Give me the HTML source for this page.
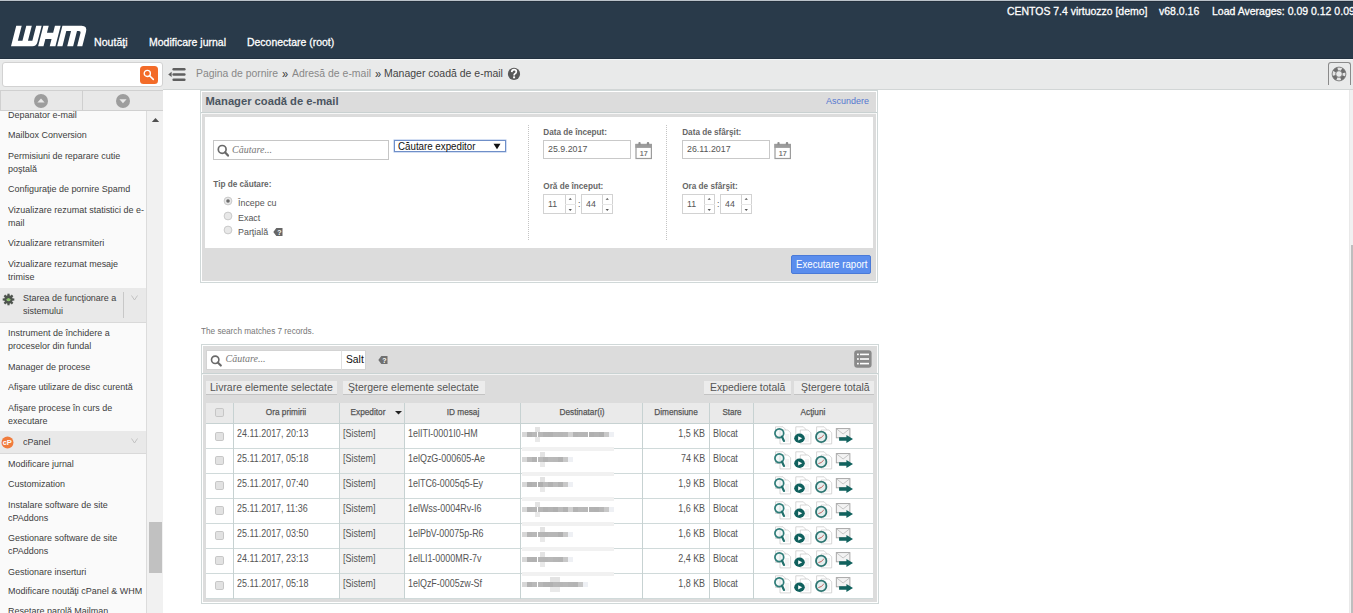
<!DOCTYPE html>
<html><head><meta charset="utf-8"><title>WHM</title>
<style>
html,body{margin:0;padding:0;width:1353px;height:613px;overflow:hidden;background:#fff;position:relative;font-family:"Liberation Sans",sans-serif;}
.t{position:absolute;white-space:nowrap;}
.r{position:absolute;}
</style></head><body>
<div class="r" style="left:0px;top:0px;width:1353px;height:1px;background:#bac2ca;"></div>
<div class="r" style="left:0px;top:1px;width:1353px;height:57px;background:#293a4a;"></div>
<div class="r" style="left:0px;top:1px;width:1353px;height:1px;background:#24303d;"></div>
<div class="r" style="left:0px;top:58px;width:1353px;height:1px;background:#223140;"></div>
<svg class="r" style="left:0;top:0" width="100" height="60" viewBox="0 0 100 60">
<g transform="translate(0,46.2) skewX(-14.33) translate(0,-46.2)" fill="#fff">
<path d="M11 25.65 H16.45 V40.7 H21.05 V25.65 H26.55 V40.7 H30.95 V25.65 H36.4 V42.2 Q36.4 46.2 32.4 46.2 H11 Z"/>
<path d="M38.1 25.65 H43.5 V32.7 H49.7 V25.65 H55.4 V46.2 H49.7 V38.9 H43.5 V46.2 H38.1 Z"/>
<path d="M57.15 25.65 H76.3 Q82.3 25.65 82.3 31.65 V46.2 H77.14 V33.3 Q77.14 31.1 74.94 31.1 H73.14 V46.2 H67.19 V31.1 H62.44 V46.2 H57.15 Z"/>
</g></svg>
<div class="t" style="left:94.4px;transform-origin:0 0;top:32px;font-size:11.66px;line-height:20px;transform:scaleX(0.9091);color:#fff;font-weight:normal;font-style:normal;font-family:'Liberation Sans', sans-serif;-webkit-text-stroke:0.3px #fff">Noutăţi</div>
<div class="t" style="left:148.6px;transform-origin:0 0;top:32px;font-size:11.55px;line-height:20px;transform:scaleX(0.9091);color:#fff;font-weight:normal;font-style:normal;font-family:'Liberation Sans', sans-serif;-webkit-text-stroke:0.3px #fff">Modificare jurnal</div>
<div class="t" style="left:247px;transform-origin:0 0;top:32px;font-size:11.5px;line-height:20px;transform:scaleX(0.9091);color:#fff;font-weight:normal;font-style:normal;font-family:'Liberation Sans', sans-serif;-webkit-text-stroke:0.3px #fff">Deconectare (root)</div>
<div class="t" style="left:1006.5px;transform-origin:0 0;top:1px;font-size:11.51px;line-height:20px;transform:scaleX(0.9091);color:#fff;font-weight:normal;font-style:normal;font-family:'Liberation Sans', sans-serif;-webkit-text-stroke:0.3px #fff">CENTOS 7.4 virtuozzo [demo]</div>
<div class="t" style="left:1159px;transform-origin:0 0;top:1px;font-size:11.55px;line-height:20px;transform:scaleX(0.9091);color:#fff;font-weight:normal;font-style:normal;font-family:'Liberation Sans', sans-serif;-webkit-text-stroke:0.3px #fff">v68.0.16</div>
<div class="t" style="left:1211.5px;transform-origin:0 0;top:1px;font-size:11.55px;line-height:20px;transform:scaleX(0.9091);color:#fff;font-weight:normal;font-style:normal;font-family:'Liberation Sans', sans-serif;-webkit-text-stroke:0.3px #fff">Load Averages: 0.09 0.12 0.09</div>
<div class="r" style="left:0px;top:59px;width:1353px;height:31px;background:#e9eaea;"></div>
<div class="r" style="left:0px;top:59px;width:1353px;height:1px;background:#f3f6f7;"></div>
<div class="r" style="left:163px;top:89px;width:1190px;height:1px;background:#d2d6d6;"></div>
<div class="r" style="left:2px;top:62px;width:160.5px;height:25px;background:#fff;border:1px solid #d2d2d2;box-sizing:border-box;border-radius:3px"></div>
<div class="r" style="left:140px;top:66px;width:18px;height:18px;background:#f36b28;border-radius:3.5px"></div>
<svg class="r" style="left:140px;top:66px" width="18" height="18" viewBox="0 0 18 18">
<circle cx="7.3" cy="7.4" r="3.1" fill="none" stroke="#fff" stroke-width="1.3"/>
<path d="M9.6 9.8 L13.3 13.4" stroke="#fff" stroke-width="1.6" stroke-linecap="round"/></svg>
<svg class="r" style="left:167px;top:66px" width="22" height="16" viewBox="0 0 22 16">
<path d="M1.2 8.4 L4.6 5.7 V11.1 Z" fill="#5f5f5f"/>
<rect x="5.4" y="1.9" width="13.2" height="2.5" rx="1.25" fill="#5f5f5f"/>
<rect x="5.4" y="7.15" width="13.2" height="2.5" rx="1.25" fill="#5f5f5f"/>
<rect x="5.4" y="12.4" width="13.2" height="2.5" rx="1.25" fill="#5f5f5f"/></svg>
<div class="t" style="left:196.3px;transform-origin:0 0;top:63px;font-size:11.44px;line-height:20px;transform:scaleX(0.9091);color:#888;font-weight:normal;font-style:normal;font-family:'Liberation Sans', sans-serif;">Pagina de pornire</div>
<div class="t" style="left:282.3px;transform-origin:0 0;top:64px;font-size:12.1px;line-height:20px;transform:scaleX(0.9091);color:#333;font-weight:normal;font-style:normal;font-family:'Liberation Sans', sans-serif;">»</div>
<div class="t" style="left:291.8px;transform-origin:0 0;top:63px;font-size:11.5px;line-height:20px;transform:scaleX(0.9091);color:#888;font-weight:normal;font-style:normal;font-family:'Liberation Sans', sans-serif;">Adresă de e-mail</div>
<div class="t" style="left:374.8px;transform-origin:0 0;top:64px;font-size:12.1px;line-height:20px;transform:scaleX(0.9091);color:#333;font-weight:normal;font-style:normal;font-family:'Liberation Sans', sans-serif;">»</div>
<div class="t" style="left:383.5px;transform-origin:0 0;top:63px;font-size:11.54px;line-height:20px;transform:scaleX(0.9091);color:#444;font-weight:normal;font-style:normal;font-family:'Liberation Sans', sans-serif;">Manager coadă de e-mail</div>
<svg class="r" style="left:506.5px;top:67px" width="14" height="14" viewBox="0 0 14 14">
<circle cx="7" cy="6.9" r="6.1" fill="#595959"/>
<path d="M4.7 5.1 Q4.9 2.7 7.1 2.7 Q9.3 2.7 9.3 4.7 Q9.3 6 7.9 6.8 Q7.1 7.3 7.1 8.4" fill="none" stroke="#fff" stroke-width="1.7"/>
<rect x="6.1" y="9.4" width="2" height="1.9" fill="#fff"/></svg>
<div class="r" style="left:1328.2px;top:62px;width:22.5px;height:23px;background:none;border:1px solid #8a8a8a;border-bottom:none;border-radius:3px 3px 0 0;box-sizing:border-box"></div>
<svg class="r" style="left:1331px;top:65.9px" width="16" height="16" viewBox="0 0 16 16">
<circle cx="8" cy="8" r="5.15" fill="none" stroke="#e4e4e4" stroke-width="3.7"/>
<circle cx="8" cy="8" r="5.15" fill="none" stroke="#6e6e6e" stroke-width="3.7" stroke-dasharray="4.09 4" stroke-dashoffset="-2"/>
<circle cx="8" cy="8" r="6.9" fill="none" stroke="#777" stroke-width="0.9"/>
<circle cx="8" cy="8" r="3.35" fill="none" stroke="#777" stroke-width="0.9"/></svg>
<div class="r" style="left:0px;top:90px;width:163px;height:523px;background:#fafafa;"></div>
<div class="r" style="left:0px;top:90px;width:163px;height:20.5px;background:#e8e8e8;border-top:1px solid #d0d0d0;border-bottom:1px solid #d0d0d0;box-sizing:border-box"></div>
<div class="r" style="left:0px;top:90px;width:1px;height:20.5px;background:#d0d0d0;"></div>
<div class="r" style="left:81.5px;top:90px;width:1px;height:20.5px;background:#cfcfcf;"></div>
<svg class="r" style="left:33px;top:93px" width="16" height="16" viewBox="0 0 16 16">
<circle cx="8" cy="8" r="7" fill="#9d9d9d"/><path d="M4.4 9.6 L8 5.6 L11.6 9.6 Z" fill="#e8e8e8"/></svg>
<svg class="r" style="left:115px;top:93px" width="16" height="16" viewBox="0 0 16 16">
<circle cx="8" cy="8" r="7" fill="#9d9d9d"/><path d="M4.4 6.2 L8 10.2 L11.6 6.2 Z" fill="#e8e8e8"/></svg>
<div class="r" style="left:146px;top:111px;width:17px;height:502px;background:#f1f1f1;border-left:1px solid #dcdcdc;box-sizing:border-box"></div>
<div class="r" style="left:149.3px;top:522px;width:12.5px;height:51px;background:#c1c1c1;"></div>
<svg class="r" style="left:150px;top:116px" width="11" height="8" viewBox="0 0 11 8"><path d="M1.8 6 L5.5 2 L9.2 6 Z" fill="#505050"/></svg>
<div class="t" style="left:7.6px;transform-origin:0 0;top:105px;font-size:9.9px;line-height:20px;transform:scaleX(0.9091);color:#3d3d3d;font-weight:normal;font-style:normal;font-family:'Liberation Sans', sans-serif;">Depanator e-mail</div>
<div class="t" style="left:7.6px;transform-origin:0 0;top:125px;font-size:9.9px;line-height:20px;transform:scaleX(0.9091);color:#3d3d3d;font-weight:normal;font-style:normal;font-family:'Liberation Sans', sans-serif;">Mailbox Conversion</div>
<div class="t" style="left:7.6px;transform-origin:0 0;top:146px;font-size:9.9px;line-height:20px;transform:scaleX(0.9091);color:#3d3d3d;font-weight:normal;font-style:normal;font-family:'Liberation Sans', sans-serif;">Permisiuni de reparare cutie</div>
<div class="t" style="left:7.6px;transform-origin:0 0;top:159px;font-size:9.9px;line-height:20px;transform:scaleX(0.9091);color:#3d3d3d;font-weight:normal;font-style:normal;font-family:'Liberation Sans', sans-serif;">poştală</div>
<div class="t" style="left:7.6px;transform-origin:0 0;top:179px;font-size:9.9px;line-height:20px;transform:scaleX(0.9091);color:#3d3d3d;font-weight:normal;font-style:normal;font-family:'Liberation Sans', sans-serif;">Configuraţie de pornire Spamd</div>
<div class="t" style="left:7.6px;transform-origin:0 0;top:200px;font-size:9.9px;line-height:20px;transform:scaleX(0.9091);color:#3d3d3d;font-weight:normal;font-style:normal;font-family:'Liberation Sans', sans-serif;">Vizualizare rezumat statistici de e-</div>
<div class="t" style="left:7.6px;transform-origin:0 0;top:213px;font-size:9.9px;line-height:20px;transform:scaleX(0.9091);color:#3d3d3d;font-weight:normal;font-style:normal;font-family:'Liberation Sans', sans-serif;">mail</div>
<div class="t" style="left:7.6px;transform-origin:0 0;top:233px;font-size:9.9px;line-height:20px;transform:scaleX(0.9091);color:#3d3d3d;font-weight:normal;font-style:normal;font-family:'Liberation Sans', sans-serif;">Vizualizare retransmiteri</div>
<div class="t" style="left:7.6px;transform-origin:0 0;top:254px;font-size:9.9px;line-height:20px;transform:scaleX(0.9091);color:#3d3d3d;font-weight:normal;font-style:normal;font-family:'Liberation Sans', sans-serif;">Vizualizare rezumat mesaje</div>
<div class="t" style="left:7.6px;transform-origin:0 0;top:267px;font-size:9.9px;line-height:20px;transform:scaleX(0.9091);color:#3d3d3d;font-weight:normal;font-style:normal;font-family:'Liberation Sans', sans-serif;">trimise</div>
<div class="t" style="left:7.6px;transform-origin:0 0;top:323px;font-size:9.9px;line-height:20px;transform:scaleX(0.9091);color:#3d3d3d;font-weight:normal;font-style:normal;font-family:'Liberation Sans', sans-serif;">Instrument de închidere a</div>
<div class="t" style="left:7.6px;transform-origin:0 0;top:336px;font-size:9.9px;line-height:20px;transform:scaleX(0.9091);color:#3d3d3d;font-weight:normal;font-style:normal;font-family:'Liberation Sans', sans-serif;">proceselor din fundal</div>
<div class="t" style="left:7.6px;transform-origin:0 0;top:357px;font-size:9.9px;line-height:20px;transform:scaleX(0.9091);color:#3d3d3d;font-weight:normal;font-style:normal;font-family:'Liberation Sans', sans-serif;">Manager de procese</div>
<div class="t" style="left:7.6px;transform-origin:0 0;top:377px;font-size:9.9px;line-height:20px;transform:scaleX(0.9091);color:#3d3d3d;font-weight:normal;font-style:normal;font-family:'Liberation Sans', sans-serif;">Afişare utilizare de disc curentă</div>
<div class="t" style="left:7.6px;transform-origin:0 0;top:398px;font-size:9.9px;line-height:20px;transform:scaleX(0.9091);color:#3d3d3d;font-weight:normal;font-style:normal;font-family:'Liberation Sans', sans-serif;">Afişare procese în curs de</div>
<div class="t" style="left:7.6px;transform-origin:0 0;top:411px;font-size:9.9px;line-height:20px;transform:scaleX(0.9091);color:#3d3d3d;font-weight:normal;font-style:normal;font-family:'Liberation Sans', sans-serif;">executare</div>
<div class="t" style="left:7.6px;transform-origin:0 0;top:454px;font-size:9.9px;line-height:20px;transform:scaleX(0.9091);color:#3d3d3d;font-weight:normal;font-style:normal;font-family:'Liberation Sans', sans-serif;">Modificare jurnal</div>
<div class="t" style="left:7.6px;transform-origin:0 0;top:474px;font-size:9.9px;line-height:20px;transform:scaleX(0.9091);color:#3d3d3d;font-weight:normal;font-style:normal;font-family:'Liberation Sans', sans-serif;">Customization</div>
<div class="t" style="left:7.6px;transform-origin:0 0;top:495px;font-size:9.9px;line-height:20px;transform:scaleX(0.9091);color:#3d3d3d;font-weight:normal;font-style:normal;font-family:'Liberation Sans', sans-serif;">Instalare software de site</div>
<div class="t" style="left:7.6px;transform-origin:0 0;top:508px;font-size:9.9px;line-height:20px;transform:scaleX(0.9091);color:#3d3d3d;font-weight:normal;font-style:normal;font-family:'Liberation Sans', sans-serif;">cPAddons</div>
<div class="t" style="left:7.6px;transform-origin:0 0;top:528px;font-size:9.9px;line-height:20px;transform:scaleX(0.9091);color:#3d3d3d;font-weight:normal;font-style:normal;font-family:'Liberation Sans', sans-serif;">Gestionare software de site</div>
<div class="t" style="left:7.6px;transform-origin:0 0;top:541px;font-size:9.9px;line-height:20px;transform:scaleX(0.9091);color:#3d3d3d;font-weight:normal;font-style:normal;font-family:'Liberation Sans', sans-serif;">cPAddons</div>
<div class="t" style="left:7.6px;transform-origin:0 0;top:562px;font-size:9.9px;line-height:20px;transform:scaleX(0.9091);color:#3d3d3d;font-weight:normal;font-style:normal;font-family:'Liberation Sans', sans-serif;">Gestionare inserturi</div>
<div class="t" style="left:7.6px;transform-origin:0 0;top:581px;font-size:9.9px;line-height:20px;transform:scaleX(0.9091);color:#3d3d3d;font-weight:normal;font-style:normal;font-family:'Liberation Sans', sans-serif;">Modificare noutăţi cPanel &amp; WHM</div>
<div class="t" style="left:7.6px;transform-origin:0 0;top:601px;font-size:9.9px;line-height:20px;transform:scaleX(0.9091);color:#3d3d3d;font-weight:normal;font-style:normal;font-family:'Liberation Sans', sans-serif;">Resetare parolă Mailman</div>
<div class="r" style="left:0px;top:288px;width:146px;height:35px;background:#e9e9e9;border-bottom:1px solid #d9d9d9;box-sizing:border-box"></div>
<div class="t" style="left:22.5px;transform-origin:0 0;top:288px;font-size:9.9px;line-height:20px;transform:scaleX(0.9091);color:#3d3d3d;font-weight:normal;font-style:normal;font-family:'Liberation Sans', sans-serif;">Starea de funcţionare a</div>
<div class="t" style="left:22.5px;transform-origin:0 0;top:301px;font-size:9.9px;line-height:20px;transform:scaleX(0.9091);color:#3d3d3d;font-weight:normal;font-style:normal;font-family:'Liberation Sans', sans-serif;">sistemului</div>
<div class="r" style="left:123px;top:292px;width:1px;height:25.5px;background:#c8c8c8;"></div>
<svg class="r" style="left:130px;top:294px" width="9" height="8" viewBox="0 0 9 8"><path d="M1.5 1.5 L4.5 6 L7.5 1.5" fill="none" stroke="#bdbdbd" stroke-width="0.9"/></svg>
<svg class="r" style="left:1.5px;top:292.5px" width="13" height="13" viewBox="0 0 13 13">
<g fill="#4e544e"><circle cx="6.5" cy="6.5" r="4.2"/>
<rect x="5.4" y="0.7" width="2.2" height="11.6"/><rect x="0.7" y="5.4" width="11.6" height="2.2"/>
<rect x="5.4" y="0.7" width="2.2" height="11.6" transform="rotate(45 6.5 6.5)"/><rect x="5.4" y="0.7" width="2.2" height="11.6" transform="rotate(-45 6.5 6.5)"/></g>
<path d="M4 6.8 Q6.5 5.2 9 6.8 Q6.5 9.6 4 6.8 Z" fill="#a9d68c"/><circle cx="6.5" cy="6.5" r="1.6" fill="#8cc46a"/></svg>
<div class="r" style="left:0px;top:431px;width:146px;height:23px;background:#e9e9e9;border-bottom:1px solid #d9d9d9;box-sizing:border-box"></div>
<div class="t" style="left:22.5px;transform-origin:0 0;top:432px;font-size:9.9px;line-height:20px;transform:scaleX(0.9091);color:#3d3d3d;font-weight:normal;font-style:normal;font-family:'Liberation Sans', sans-serif;">cPanel</div>
<svg class="r" style="left:130px;top:437px" width="9" height="8" viewBox="0 0 9 8"><path d="M1.5 1.5 L4.5 6 L7.5 1.5" fill="none" stroke="#bdbdbd" stroke-width="0.9"/></svg>
<svg class="r" style="left:1.2px;top:436px" width="13" height="13" viewBox="0 0 13 13">
<circle cx="6.5" cy="6.5" r="6" fill="#f07b3c"/>
<text x="6.3" y="9.3" font-family="Liberation Sans" font-weight="bold" font-size="7.5" fill="#fff" text-anchor="middle">cP</text></svg>
<div class="r" style="left:200px;top:90px;width:678px;height:193px;background:#dcdcdc;border:1px solid #d0d8d8;box-sizing:border-box;box-shadow:inset 1px 1px 0 #fff, inset -1px -1px 0 #fff"></div>
<div class="r" style="left:201px;top:112px;width:676px;height:1px;background:#c9d1d1;"></div>
<div class="r" style="left:201px;top:113px;width:675px;height:1px;background:#f6f6f6;"></div>
<div class="t" style="left:205.5px;transform-origin:0 0;top:91px;font-size:11.2px;line-height:20px;color:#4a5560;font-weight:bold;font-style:normal;font-family:'Liberation Sans', sans-serif;">Manager coadă de e-mail</div>
<div class="t" style="left:825.8px;transform-origin:0 0;top:91px;font-size:9.9px;line-height:20px;transform:scaleX(0.9091);color:#5577d0;font-weight:normal;font-style:normal;font-family:'Liberation Sans', sans-serif;">Ascundere</div>
<div class="r" style="left:205px;top:117px;width:668px;height:131px;background:#fff;"></div>
<div class="r" style="left:213px;top:140px;width:176px;height:19.5px;background:#fff;border:1px solid #c6c6c6;box-sizing:border-box"></div>
<svg class="r" style="left:217px;top:144px" width="13" height="14" viewBox="0 0 13 14">
<circle cx="5.2" cy="5.4" r="3.9" fill="none" stroke="#6a6a6a" stroke-width="1.7"/>
<path d="M8 8.3 L11 11.6" stroke="#6a6a6a" stroke-width="2.2" stroke-linecap="round"/></svg>
<div class="t" style="left:232px;transform-origin:0 0;top:140px;font-size:10px;line-height:20px;color:#777;font-weight:normal;font-style:italic;font-family:'Liberation Serif', serif;">Căutare...</div>
<div class="r" style="left:394px;top:140px;width:112px;height:11.8px;background:#fff;border:1px solid #6f8fc8;box-sizing:border-box;box-shadow:0 0 0 0.5px #a9c0e8"></div>
<div class="t" style="left:397.5px;transform-origin:0 0;top:136px;font-size:10.73px;line-height:20px;transform:scaleX(0.9091);color:#111;font-weight:normal;font-style:normal;font-family:'Liberation Sans', sans-serif;">Căutare expeditor</div>
<svg class="r" style="left:492.5px;top:142.5px" width="8" height="7" viewBox="0 0 8 7"><path d="M0.5 0.8 H7.5 L4 6.2 Z" fill="#111"/></svg>
<div class="t" style="left:213.3px;transform-origin:0 0;top:175px;font-size:8.2px;line-height:20px;color:#666;font-weight:bold;font-style:normal;font-family:'Liberation Sans', sans-serif;">Tip de căutare:</div>
<svg class="r" style="left:222.8px;top:196.2px" width="10" height="10" viewBox="0 0 10 10"><circle cx="5" cy="5" r="3.9" fill="#e8e8e8" stroke="#c0c0c0" stroke-width="0.8"/><circle cx="5" cy="5" r="1.8" fill="#6b6b6b"/></svg>
<div class="t" style="left:237.8px;transform-origin:0 0;top:193px;font-size:9.79px;line-height:20px;transform:scaleX(0.9091);color:#555;font-weight:normal;font-style:normal;font-family:'Liberation Sans', sans-serif;">Începe cu</div>
<svg class="r" style="left:222.8px;top:210.7px" width="10" height="10" viewBox="0 0 10 10"><circle cx="5" cy="5" r="3.9" fill="#e8e8e8" stroke="#c0c0c0" stroke-width="0.8"/></svg>
<div class="t" style="left:237.8px;transform-origin:0 0;top:208px;font-size:9.79px;line-height:20px;transform:scaleX(0.9091);color:#555;font-weight:normal;font-style:normal;font-family:'Liberation Sans', sans-serif;">Exact</div>
<svg class="r" style="left:222.8px;top:225.2px" width="10" height="10" viewBox="0 0 10 10"><circle cx="5" cy="5" r="3.9" fill="#e8e8e8" stroke="#c0c0c0" stroke-width="0.8"/></svg>
<div class="t" style="left:237.8px;transform-origin:0 0;top:222px;font-size:9.79px;line-height:20px;transform:scaleX(0.9091);color:#555;font-weight:normal;font-style:normal;font-family:'Liberation Sans', sans-serif;">Parţială</div>
<svg class="r" style="left:273px;top:226.8px" width="10" height="10" viewBox="0 0 10 10"><path d="M0.3 5 L3.3 1 H9.5 V9 H3.3 Z" fill="#666"/><text x="6.3" y="8" font-family="Liberation Sans" font-weight="bold" font-size="7" fill="#fff" text-anchor="middle">?</text></svg>
<div class="r" style="left:527.5px;top:124.5px;width:0px;height:115px;background:none;border-left:1px dotted #c4c4c4"></div>
<div class="r" style="left:666.3px;top:124.5px;width:0px;height:115px;background:none;border-left:1px dotted #c4c4c4"></div>
<div class="t" style="left:543.3px;transform-origin:0 0;top:123px;font-size:8.2px;line-height:20px;color:#666;font-weight:bold;font-style:normal;font-family:'Liberation Sans', sans-serif;">Data de început:</div>
<div class="r" style="left:543.3px;top:140px;width:87.7px;height:19px;background:#fff;border:1px solid #c9c9c9;box-sizing:border-box"></div>
<div class="t" style="left:548.0999999999999px;transform-origin:0 0;top:139px;font-size:9.74px;line-height:20px;transform:scaleX(0.9091);color:#555;font-weight:normal;font-style:normal;font-family:'Liberation Sans', sans-serif;">25.9.2017</div>
<svg class="r" style="left:634.8px;top:141.9px" width="18" height="18" viewBox="0 0 18 18"><rect x="1" y="2.5" width="15.4" height="14" fill="#fff" stroke="#9c9c9c" stroke-width="1.2"/><rect x="0.4" y="1.9" width="16.6" height="4" fill="#9c9c9c"/><rect x="3.4" y="0.1" width="2.2" height="3.2" rx="1" fill="#8f8f8f"/><rect x="11.8" y="0.1" width="2.4" height="3.2" rx="1" fill="#8f8f8f"/><text x="8.7" y="13.7" font-family="Liberation Sans" font-weight="bold" font-size="7.2" fill="#7a7a7a" text-anchor="middle">17</text></svg>
<div class="t" style="left:543.3px;transform-origin:0 0;top:177px;font-size:8.2px;line-height:20px;color:#666;font-weight:bold;font-style:normal;font-family:'Liberation Sans', sans-serif;">Oră de început:</div>
<div class="r" style="left:543.3px;top:194.3px;width:32.3px;height:20px;background:#fff;border:1px solid #d2d2d2;box-sizing:border-box"></div><div class="r" style="left:565.0999999999999px;top:194.3px;width:10.5px;height:20px;background:#fff;border:1px solid #d2d2d2;box-sizing:border-box"></div><div class="r" style="left:565.0999999999999px;top:204.3px;width:10.5px;height:1px;background:#e6e6e6;"></div><svg class="r" style="left:565.0999999999999px;top:194.3px" width="10.5" height="20" viewBox="0 0 10.5 20"><path d="M3.6 5.8 L5.25 3.9 L6.9 5.8 Z M3.6 15 L5.25 16.9 L6.9 15 Z" fill="#555"/></svg><div class="t" style="left:548.0999999999999px;transform-origin:0 0;top:194px;font-size:9.68px;line-height:20px;transform:scaleX(0.9091);color:#555;font-weight:normal;font-style:normal;font-family:'Liberation Sans', sans-serif;">11</div>
<div class="t" style="left:578.3px;transform-origin:0 0;top:194px;font-size:9.68px;line-height:20px;transform:scaleX(0.9091);color:#555;font-weight:normal;font-style:normal;font-family:'Liberation Sans', sans-serif;">:</div>
<div class="r" style="left:581.3px;top:194.3px;width:31.5px;height:20px;background:#fff;border:1px solid #d2d2d2;box-sizing:border-box"></div><div class="r" style="left:602.3px;top:194.3px;width:10.5px;height:20px;background:#fff;border:1px solid #d2d2d2;box-sizing:border-box"></div><div class="r" style="left:602.3px;top:204.3px;width:10.5px;height:1px;background:#e6e6e6;"></div><svg class="r" style="left:602.3px;top:194.3px" width="10.5" height="20" viewBox="0 0 10.5 20"><path d="M3.6 5.8 L5.25 3.9 L6.9 5.8 Z M3.6 15 L5.25 16.9 L6.9 15 Z" fill="#555"/></svg><div class="t" style="left:586.0999999999999px;transform-origin:0 0;top:194px;font-size:9.68px;line-height:20px;transform:scaleX(0.9091);color:#555;font-weight:normal;font-style:normal;font-family:'Liberation Sans', sans-serif;">44</div>
<div class="t" style="left:682.2px;transform-origin:0 0;top:123px;font-size:8.2px;line-height:20px;color:#666;font-weight:bold;font-style:normal;font-family:'Liberation Sans', sans-serif;">Data de sfârşit:</div>
<div class="r" style="left:682.2px;top:140px;width:87.7px;height:19px;background:#fff;border:1px solid #c9c9c9;box-sizing:border-box"></div>
<div class="t" style="left:687.0px;transform-origin:0 0;top:139px;font-size:9.74px;line-height:20px;transform:scaleX(0.9091);color:#555;font-weight:normal;font-style:normal;font-family:'Liberation Sans', sans-serif;">26.11.2017</div>
<svg class="r" style="left:773.7px;top:141.9px" width="18" height="18" viewBox="0 0 18 18"><rect x="1" y="2.5" width="15.4" height="14" fill="#fff" stroke="#9c9c9c" stroke-width="1.2"/><rect x="0.4" y="1.9" width="16.6" height="4" fill="#9c9c9c"/><rect x="3.4" y="0.1" width="2.2" height="3.2" rx="1" fill="#8f8f8f"/><rect x="11.8" y="0.1" width="2.4" height="3.2" rx="1" fill="#8f8f8f"/><text x="8.7" y="13.7" font-family="Liberation Sans" font-weight="bold" font-size="7.2" fill="#7a7a7a" text-anchor="middle">17</text></svg>
<div class="t" style="left:682.2px;transform-origin:0 0;top:177px;font-size:8.2px;line-height:20px;color:#666;font-weight:bold;font-style:normal;font-family:'Liberation Sans', sans-serif;">Ora de sfârşit:</div>
<div class="r" style="left:682.2px;top:194.3px;width:32.3px;height:20px;background:#fff;border:1px solid #d2d2d2;box-sizing:border-box"></div><div class="r" style="left:704.0px;top:194.3px;width:10.5px;height:20px;background:#fff;border:1px solid #d2d2d2;box-sizing:border-box"></div><div class="r" style="left:704.0px;top:204.3px;width:10.5px;height:1px;background:#e6e6e6;"></div><svg class="r" style="left:704.0px;top:194.3px" width="10.5" height="20" viewBox="0 0 10.5 20"><path d="M3.6 5.8 L5.25 3.9 L6.9 5.8 Z M3.6 15 L5.25 16.9 L6.9 15 Z" fill="#555"/></svg><div class="t" style="left:687.0px;transform-origin:0 0;top:194px;font-size:9.68px;line-height:20px;transform:scaleX(0.9091);color:#555;font-weight:normal;font-style:normal;font-family:'Liberation Sans', sans-serif;">11</div>
<div class="t" style="left:717.2px;transform-origin:0 0;top:194px;font-size:9.68px;line-height:20px;transform:scaleX(0.9091);color:#555;font-weight:normal;font-style:normal;font-family:'Liberation Sans', sans-serif;">:</div>
<div class="r" style="left:720.2px;top:194.3px;width:31.5px;height:20px;background:#fff;border:1px solid #d2d2d2;box-sizing:border-box"></div><div class="r" style="left:741.2px;top:194.3px;width:10.5px;height:20px;background:#fff;border:1px solid #d2d2d2;box-sizing:border-box"></div><div class="r" style="left:741.2px;top:204.3px;width:10.5px;height:1px;background:#e6e6e6;"></div><svg class="r" style="left:741.2px;top:194.3px" width="10.5" height="20" viewBox="0 0 10.5 20"><path d="M3.6 5.8 L5.25 3.9 L6.9 5.8 Z M3.6 15 L5.25 16.9 L6.9 15 Z" fill="#555"/></svg><div class="t" style="left:725.0px;transform-origin:0 0;top:194px;font-size:9.68px;line-height:20px;transform:scaleX(0.9091);color:#555;font-weight:normal;font-style:normal;font-family:'Liberation Sans', sans-serif;">44</div>
<div class="r" style="left:791px;top:255px;width:80px;height:19px;background:#5a8ded;border:1px solid #4a7ad8;border-radius:2px;box-sizing:border-box"></div>
<div class="t" style="left:795.5px;transform-origin:0 0;top:254px;font-size:10.63px;line-height:20px;transform:scaleX(0.9091);color:#fff;font-weight:normal;font-style:normal;font-family:'Liberation Sans', sans-serif;">Executare raport</div>
<div class="t" style="left:201.2px;transform-origin:0 0;top:321px;font-size:9.02px;line-height:20px;transform:scaleX(0.9091);color:#777;font-weight:normal;font-style:normal;font-family:'Liberation Sans', sans-serif;">The search matches 7 records.</div>
<div class="r" style="left:201px;top:344px;width:678px;height:260px;background:#dcdcdc;border:1px solid #d0d8d8;box-sizing:border-box;box-shadow:inset 1px 1px 0 #fff, inset -1px -1px 0 #fff"></div>
<div class="r" style="left:202px;top:372.8px;width:676px;height:1px;background:#c9d3d3;"></div>
<div class="r" style="left:202px;top:373.8px;width:676px;height:1px;background:#f3f3f3;"></div>
<div class="r" style="left:206.3px;top:349.6px;width:135.5px;height:20px;background:#fff;border:1px solid #d3d3d3;box-sizing:border-box"></div>
<div class="r" style="left:341.3px;top:349.6px;width:25.2px;height:20px;background:#fff;border:1px solid #d3d3d3;border-left:1px solid #e0e0e0;box-sizing:border-box"></div>
<svg class="r" style="left:210px;top:354.5px" width="13" height="12" viewBox="0 0 13 12">
<circle cx="5.2" cy="4.8" r="3.7" fill="none" stroke="#6a6a6a" stroke-width="1.6"/>
<path d="M7.8 7.5 L10.8 10.6" stroke="#6a6a6a" stroke-width="2.1" stroke-linecap="round"/></svg>
<div class="t" style="left:225.6px;transform-origin:0 0;top:349px;font-size:10px;line-height:20px;color:#777;font-weight:normal;font-style:italic;font-family:'Liberation Serif', serif;">Căutare...</div>
<div class="t" style="left:345.6px;transform-origin:0 0;top:349px;font-size:11.33px;line-height:20px;transform:scaleX(0.9091);color:#111;font-weight:normal;font-style:normal;font-family:'Liberation Sans', sans-serif;">Salt</div>
<svg class="r" style="left:377.5px;top:354.6px" width="10" height="10" viewBox="0 0 10 10"><path d="M0.3 5 L3.3 1 H9.5 V9 H3.3 Z" fill="#707070"/><text x="6.3" y="8" font-family="Liberation Sans" font-weight="bold" font-size="7" fill="#fff" text-anchor="middle">?</text></svg>
<svg class="r" style="left:854px;top:350px" width="18" height="18" viewBox="0 0 18 18">
<rect x="0.2" y="0.2" width="17.4" height="17.6" rx="3" fill="#8a8a8a"/>
<rect x="3" y="3.6" width="1.8" height="1.6" fill="#fff"/><rect x="6" y="3.6" width="9" height="1.6" fill="#fff"/>
<rect x="3" y="8.2" width="1.8" height="1.6" fill="#fff"/><rect x="6" y="8.2" width="9" height="1.6" fill="#fff"/>
<rect x="3" y="12.8" width="1.8" height="1.6" fill="#fff"/><rect x="6" y="12.8" width="9" height="1.6" fill="#fff"/></svg>
<div class="r" style="left:205.6px;top:380.6px;width:131.6px;height:14.6px;background:#ececec;border-bottom:1.2px solid #c3c3c3;box-sizing:border-box"></div><div class="t" style="left:210.3px;transform-origin:0 0;top:377px;font-size:11.53px;line-height:20px;transform:scaleX(0.9091);color:#555;font-weight:normal;font-style:normal;font-family:'Liberation Sans', sans-serif;">Livrare elemente selectate</div>
<div class="r" style="left:343px;top:380.6px;width:141.5px;height:14.6px;background:#ececec;border-bottom:1.2px solid #c3c3c3;box-sizing:border-box"></div><div class="t" style="left:348.2px;transform-origin:0 0;top:377px;font-size:11.53px;line-height:20px;transform:scaleX(0.9091);color:#555;font-weight:normal;font-style:normal;font-family:'Liberation Sans', sans-serif;">Ştergere elemente selectate</div>
<div class="r" style="left:703.7px;top:380.8px;width:86.9px;height:14.6px;background:#ececec;border-bottom:1.2px solid #c3c3c3;box-sizing:border-box"></div><div class="t" style="left:709.6px;transform-origin:0 0;top:377px;font-size:11.47px;line-height:20px;transform:scaleX(0.9091);color:#555;font-weight:normal;font-style:normal;font-family:'Liberation Sans', sans-serif;">Expediere totală</div>
<div class="r" style="left:794.3px;top:380.8px;width:80.1px;height:14.6px;background:#ececec;border-bottom:1.2px solid #c3c3c3;box-sizing:border-box"></div><div class="t" style="left:800.5px;transform-origin:0 0;top:377px;font-size:11.52px;line-height:20px;transform:scaleX(0.9091);color:#555;font-weight:normal;font-style:normal;font-family:'Liberation Sans', sans-serif;">Ştergere totală</div>
<div class="r" style="left:206.2px;top:403px;width:666.8px;height:20.5px;background:#eaeaea;"></div>
<div class="r" style="left:206.2px;top:424.0px;width:666.8px;height:24.95px;background:#fff;"></div>
<div class="r" style="left:339.3px;top:424.0px;width:65.3px;height:24.95px;background:#f2f2f2;"></div>
<div class="r" style="left:206.2px;top:447.95px;width:666.8px;height:1px;background:#d0dada;"></div>
<div class="r" style="left:206.2px;top:448.95px;width:666.8px;height:24.95px;background:#fff;"></div>
<div class="r" style="left:339.3px;top:448.95px;width:65.3px;height:24.95px;background:#f2f2f2;"></div>
<div class="r" style="left:206.2px;top:472.9px;width:666.8px;height:1px;background:#d0dada;"></div>
<div class="r" style="left:206.2px;top:473.9px;width:666.8px;height:24.95px;background:#fff;"></div>
<div class="r" style="left:339.3px;top:473.9px;width:65.3px;height:24.95px;background:#f2f2f2;"></div>
<div class="r" style="left:206.2px;top:497.84999999999997px;width:666.8px;height:1px;background:#d0dada;"></div>
<div class="r" style="left:206.2px;top:498.85px;width:666.8px;height:24.95px;background:#fff;"></div>
<div class="r" style="left:339.3px;top:498.85px;width:65.3px;height:24.95px;background:#f2f2f2;"></div>
<div class="r" style="left:206.2px;top:522.8000000000001px;width:666.8px;height:1px;background:#d0dada;"></div>
<div class="r" style="left:206.2px;top:523.8px;width:666.8px;height:24.95px;background:#fff;"></div>
<div class="r" style="left:339.3px;top:523.8px;width:65.3px;height:24.95px;background:#f2f2f2;"></div>
<div class="r" style="left:206.2px;top:547.75px;width:666.8px;height:1px;background:#d0dada;"></div>
<div class="r" style="left:206.2px;top:548.75px;width:666.8px;height:24.95px;background:#fff;"></div>
<div class="r" style="left:339.3px;top:548.75px;width:65.3px;height:24.95px;background:#f2f2f2;"></div>
<div class="r" style="left:206.2px;top:572.7px;width:666.8px;height:1px;background:#d0dada;"></div>
<div class="r" style="left:206.2px;top:573.7px;width:666.8px;height:24.95px;background:#fff;"></div>
<div class="r" style="left:339.3px;top:573.7px;width:65.3px;height:24.95px;background:#f2f2f2;"></div>
<div class="r" style="left:206.2px;top:597.6500000000001px;width:666.8px;height:1px;background:#d0dada;"></div>
<div class="r" style="left:206.2px;top:423px;width:666.8px;height:1.2px;background:#c7d2d2;"></div>
<div class="r" style="left:232.8px;top:403px;width:1px;height:195.65px;background:#c7d2d2;"></div>
<div class="r" style="left:338.8px;top:403px;width:1px;height:195.65px;background:#c7d2d2;"></div>
<div class="r" style="left:404.1px;top:403px;width:1px;height:195.65px;background:#c7d2d2;"></div>
<div class="r" style="left:520.1px;top:403px;width:1px;height:195.65px;background:#c7d2d2;"></div>
<div class="r" style="left:641.9px;top:403px;width:1px;height:195.65px;background:#c7d2d2;"></div>
<div class="r" style="left:709.0px;top:403px;width:1px;height:195.65px;background:#c7d2d2;"></div>
<div class="r" style="left:753.0px;top:403px;width:1px;height:195.65px;background:#c7d2d2;"></div>
<div class="t" style="left:86.30000000000001px;width:400px;text-align:center;transform-origin:50% 0;top:402px;font-size:9.08px;line-height:20px;transform:scaleX(0.9091);color:#555;font-weight:normal;font-style:normal;font-family:'Liberation Sans', sans-serif;-webkit-text-stroke:0.25px #555">Ora primirii</div>
<div class="t" style="left:168.3px;width:400px;text-align:center;transform-origin:50% 0;top:402px;font-size:9.08px;line-height:20px;transform:scaleX(0.9091);color:#555;font-weight:normal;font-style:normal;font-family:'Liberation Sans', sans-serif;-webkit-text-stroke:0.25px #555">Expeditor</div>
<svg class="r" style="left:394.5px;top:410.5px" width="7" height="4" viewBox="0 0 7 4"><path d="M0 0 H7 L3.5 3.6 Z" fill="#222"/></svg>
<div class="t" style="left:262.6px;width:400px;text-align:center;transform-origin:50% 0;top:402px;font-size:9.08px;line-height:20px;transform:scaleX(0.9091);color:#555;font-weight:normal;font-style:normal;font-family:'Liberation Sans', sans-serif;-webkit-text-stroke:0.25px #555">ID mesaj</div>
<div class="t" style="left:381.5px;width:400px;text-align:center;transform-origin:50% 0;top:402px;font-size:9.08px;line-height:20px;transform:scaleX(0.9091);color:#555;font-weight:normal;font-style:normal;font-family:'Liberation Sans', sans-serif;-webkit-text-stroke:0.25px #555">Destinatar(i)</div>
<div class="t" style="left:475.95000000000005px;width:400px;text-align:center;transform-origin:50% 0;top:402px;font-size:9.08px;line-height:20px;transform:scaleX(0.9091);color:#555;font-weight:normal;font-style:normal;font-family:'Liberation Sans', sans-serif;-webkit-text-stroke:0.25px #555">Dimensiune</div>
<div class="t" style="left:531.5px;width:400px;text-align:center;transform-origin:50% 0;top:402px;font-size:8.8px;line-height:20px;transform:scaleX(0.9091);color:#555;font-weight:normal;font-style:normal;font-family:'Liberation Sans', sans-serif;-webkit-text-stroke:0.25px #555">Stare</div>
<div class="t" style="left:613.25px;width:400px;text-align:center;transform-origin:50% 0;top:402px;font-size:9.08px;line-height:20px;transform:scaleX(0.9091);color:#555;font-weight:normal;font-style:normal;font-family:'Liberation Sans', sans-serif;-webkit-text-stroke:0.25px #555">Acţiuni</div>
<svg class="r" style="left:214.6px;top:408.3px" width="9" height="9" viewBox="0 0 9 9"><rect x="0.5" y="0.5" width="8" height="8" rx="1.3" fill="#e2e2e2" stroke="#c2c2c2" stroke-width="0.9"/></svg>
<svg class="r" style="left:214.6px;top:431.5px" width="9" height="9" viewBox="0 0 9 9"><rect x="0.5" y="0.5" width="8" height="8" rx="1.3" fill="#e2e2e2" stroke="#c2c2c2" stroke-width="0.9"/></svg>
<div class="t" style="left:236.6px;transform-origin:0 0;top:424px;font-size:10.02px;line-height:20px;transform:scaleX(0.8929);color:#555;font-weight:normal;font-style:normal;font-family:'Liberation Sans', sans-serif;">24.11.2017, 20:13</div>
<div class="t" style="left:342.6px;transform-origin:0 0;top:424px;font-size:10.08px;line-height:20px;transform:scaleX(0.8929);color:#555;font-weight:normal;font-style:normal;font-family:'Liberation Sans', sans-serif;">[Sistem]</div>
<div class="t" style="left:408.3px;transform-origin:0 0;top:424px;font-size:10.02px;line-height:20px;transform:scaleX(0.8929);color:#555;font-weight:normal;font-style:normal;font-family:'Liberation Sans', sans-serif;">1elITI-0001I0-HM</div>
<div class="t" style="right:647.9px;transform-origin:100% 0;top:424px;font-size:10.02px;line-height:20px;transform:scaleX(0.8929);color:#555;font-weight:normal;font-style:normal;font-family:'Liberation Sans', sans-serif;">1,5 KB</div>
<div class="t" style="left:712.7px;transform-origin:0 0;top:424px;font-size:10.02px;line-height:20px;transform:scaleX(0.8929);color:#555;font-weight:normal;font-style:normal;font-family:'Liberation Sans', sans-serif;">Blocat</div>
<svg class="r" style="left:772.8px;top:425.7px" width="84" height="20" viewBox="-2 0 84 20">
<g fill="#fff" stroke="#c6c6c6" stroke-width="0.7">
<path d="M0.5 0.8 H8 L10.5 3.3 V12.5 H0.5 Z"/><path d="M5 4 H12.8 L15.6 6.8 V17.9 H5 Z"/>
<path d="M20.8 0.8 H28.3 L30.8 3.3 V12.5 H20.8 Z"/><path d="M25.3 4 H33.1 L35.9 6.8 V17.9 H25.3 Z"/>
<path d="M41.6 0.8 H49.1 L51.6 3.3 V12.5 H41.6 Z"/><path d="M46.1 4 H53.9 L56.7 6.8 V17.9 H46.1 Z"/></g>
<g stroke="#d8d8d8" stroke-width="0.6"><path d="M10 9 H14 M10 11 H14 M10 13 H14 M10 15 H14 M30 9 H34 M30 11 H34 M30 13 H34 M30 15 H34 M51 9 H55 M51 11 H55 M51 13 H55 M51 15 H55"/></g>
<circle cx="4.3" cy="7.2" r="4.4" fill="rgba(220,235,235,0.35)" stroke="#2f7d79" stroke-width="1.7"/>
<path d="M7 10.6 L8.9 14.9" stroke="#22706c" stroke-width="2.3" stroke-linecap="round"/>
<ellipse cx="24.5" cy="12.3" rx="5.3" ry="4.7" fill="#0f605d"/><path d="M23.2 10.2 V14.4 L27.2 12.3 Z" fill="#fff"/>
<circle cx="46.2" cy="10.9" r="5.2" fill="#e4eeee" stroke="#2d7672" stroke-width="1.8"/><path d="M43.4 12.6 Q46.4 12.2 48.8 9" stroke="#c0504d" stroke-width="0.9" fill="none"/>
<rect x="61.3" y="2.6" width="13.6" height="9.2" fill="#f3f3f3" stroke="#a0a0a0" stroke-width="0.9"/>
<path d="M61.6 2.9 L68.1 8 L74.6 2.9" fill="none" stroke="#b8b8b8" stroke-width="0.8"/>
<path d="M64.1 11.2 H71.4 V8.9 L78 12.9 L71.4 16.9 V14.7 H64.1 Z" fill="#11625e"/>
</svg>
<div class="r" style="left:522.2px;top:431.9px;width:5.1px;height:5.2px;background:#d7d7d7;"></div>
<div class="r" style="left:527.3000000000001px;top:431.9px;width:5.1px;height:5.2px;background:#b3b3b3;"></div>
<div class="r" style="left:532.4000000000001px;top:431.9px;width:5.1px;height:5.2px;background:#b9b9b9;"></div>
<div class="r" style="left:537.5px;top:431.9px;width:5.1px;height:5.2px;background:#b8b8b8;"></div>
<div class="r" style="left:542.6px;top:431.9px;width:5.1px;height:5.2px;background:#b2b2b2;"></div>
<div class="r" style="left:547.7px;top:431.9px;width:5.1px;height:5.2px;background:#b1b1b1;"></div>
<div class="r" style="left:552.8000000000001px;top:431.9px;width:5.1px;height:5.2px;background:#b7b7b7;"></div>
<div class="r" style="left:557.9000000000001px;top:431.9px;width:5.1px;height:5.2px;background:#b6b6b6;"></div>
<div class="r" style="left:563.0px;top:431.9px;width:5.1px;height:5.2px;background:#b8b8b8;"></div>
<div class="r" style="left:568.1px;top:431.9px;width:5.1px;height:5.2px;background:#d0d0d0;"></div>
<div class="r" style="left:573.2px;top:431.9px;width:5.1px;height:5.2px;background:#b4b4b4;"></div>
<div class="r" style="left:578.3000000000001px;top:431.9px;width:5.1px;height:5.2px;background:#b6b6b6;"></div>
<div class="r" style="left:583.4000000000001px;top:431.9px;width:5.1px;height:5.2px;background:#b6b6b6;"></div>
<div class="r" style="left:588.5px;top:431.9px;width:5.1px;height:5.2px;background:#b0b0b0;"></div>
<div class="r" style="left:593.6px;top:431.9px;width:5.1px;height:5.2px;background:#b3b3b3;"></div>
<div class="r" style="left:598.7px;top:431.9px;width:5.1px;height:5.2px;background:#afafaf;"></div>
<div class="r" style="left:603.8000000000001px;top:431.9px;width:5.1px;height:5.2px;background:#c8c8c8;"></div>
<div class="r" style="left:608.9000000000001px;top:431.9px;width:5.1px;height:5.2px;background:#eef0f4;"></div>
<div class="r" style="left:535px;top:426.9px;width:5px;height:5px;background:rgba(175,175,175,0.35);"></div>
<div class="r" style="left:535px;top:437.1px;width:5px;height:5px;background:rgba(175,175,175,0.28);"></div>
<svg class="r" style="left:214.6px;top:456.45px" width="9" height="9" viewBox="0 0 9 9"><rect x="0.5" y="0.5" width="8" height="8" rx="1.3" fill="#e2e2e2" stroke="#c2c2c2" stroke-width="0.9"/></svg>
<div class="t" style="left:236.6px;transform-origin:0 0;top:449px;font-size:10.02px;line-height:20px;transform:scaleX(0.8929);color:#555;font-weight:normal;font-style:normal;font-family:'Liberation Sans', sans-serif;">25.11.2017, 05:18</div>
<div class="t" style="left:342.6px;transform-origin:0 0;top:449px;font-size:10.08px;line-height:20px;transform:scaleX(0.8929);color:#555;font-weight:normal;font-style:normal;font-family:'Liberation Sans', sans-serif;">[Sistem]</div>
<div class="t" style="left:408.3px;transform-origin:0 0;top:449px;font-size:10.02px;line-height:20px;transform:scaleX(0.8929);color:#555;font-weight:normal;font-style:normal;font-family:'Liberation Sans', sans-serif;">1elQzG-000605-Ae</div>
<div class="t" style="right:647.9px;transform-origin:100% 0;top:449px;font-size:10.02px;line-height:20px;transform:scaleX(0.8929);color:#555;font-weight:normal;font-style:normal;font-family:'Liberation Sans', sans-serif;">74 KB</div>
<div class="t" style="left:712.7px;transform-origin:0 0;top:449px;font-size:10.02px;line-height:20px;transform:scaleX(0.8929);color:#555;font-weight:normal;font-style:normal;font-family:'Liberation Sans', sans-serif;">Blocat</div>
<svg class="r" style="left:772.8px;top:450.65px" width="84" height="20" viewBox="-2 0 84 20">
<g fill="#fff" stroke="#c6c6c6" stroke-width="0.7">
<path d="M0.5 0.8 H8 L10.5 3.3 V12.5 H0.5 Z"/><path d="M5 4 H12.8 L15.6 6.8 V17.9 H5 Z"/>
<path d="M20.8 0.8 H28.3 L30.8 3.3 V12.5 H20.8 Z"/><path d="M25.3 4 H33.1 L35.9 6.8 V17.9 H25.3 Z"/>
<path d="M41.6 0.8 H49.1 L51.6 3.3 V12.5 H41.6 Z"/><path d="M46.1 4 H53.9 L56.7 6.8 V17.9 H46.1 Z"/></g>
<g stroke="#d8d8d8" stroke-width="0.6"><path d="M10 9 H14 M10 11 H14 M10 13 H14 M10 15 H14 M30 9 H34 M30 11 H34 M30 13 H34 M30 15 H34 M51 9 H55 M51 11 H55 M51 13 H55 M51 15 H55"/></g>
<circle cx="4.3" cy="7.2" r="4.4" fill="rgba(220,235,235,0.35)" stroke="#2f7d79" stroke-width="1.7"/>
<path d="M7 10.6 L8.9 14.9" stroke="#22706c" stroke-width="2.3" stroke-linecap="round"/>
<ellipse cx="24.5" cy="12.3" rx="5.3" ry="4.7" fill="#0f605d"/><path d="M23.2 10.2 V14.4 L27.2 12.3 Z" fill="#fff"/>
<circle cx="46.2" cy="10.9" r="5.2" fill="#e4eeee" stroke="#2d7672" stroke-width="1.8"/><path d="M43.4 12.6 Q46.4 12.2 48.8 9" stroke="#c0504d" stroke-width="0.9" fill="none"/>
<rect x="61.3" y="2.6" width="13.6" height="9.2" fill="#f3f3f3" stroke="#a0a0a0" stroke-width="0.9"/>
<path d="M61.6 2.9 L68.1 8 L74.6 2.9" fill="none" stroke="#b8b8b8" stroke-width="0.8"/>
<path d="M64.1 11.2 H71.4 V8.9 L78 12.9 L71.4 16.9 V14.7 H64.1 Z" fill="#11625e"/>
</svg>
<div class="r" style="left:522.2px;top:446.84999999999997px;width:92.3px;height:4.4px;background:#f1f1f1;"></div>
<div class="r" style="left:522.2px;top:456.84999999999997px;width:5.1px;height:5.2px;background:#d7d7d7;"></div>
<div class="r" style="left:527.3000000000001px;top:456.84999999999997px;width:5.1px;height:5.2px;background:#bbbbbb;"></div>
<div class="r" style="left:532.4000000000001px;top:456.84999999999997px;width:5.1px;height:5.2px;background:#b2b2b2;"></div>
<div class="r" style="left:537.5px;top:456.84999999999997px;width:5.1px;height:5.2px;background:#bbbbbb;"></div>
<div class="r" style="left:542.6px;top:456.84999999999997px;width:5.1px;height:5.2px;background:#b3b3b3;"></div>
<div class="r" style="left:547.7px;top:456.84999999999997px;width:5.1px;height:5.2px;background:#b9b9b9;"></div>
<div class="r" style="left:552.8000000000001px;top:456.84999999999997px;width:5.1px;height:5.2px;background:#b8b8b8;"></div>
<div class="r" style="left:557.9000000000001px;top:456.84999999999997px;width:5.1px;height:5.2px;background:#b2b2b2;"></div>
<div class="r" style="left:563.0px;top:456.84999999999997px;width:5.1px;height:5.2px;background:#c8c8c8;"></div>
<div class="r" style="left:568.1px;top:456.84999999999997px;width:5.1px;height:5.2px;background:#eef0f4;"></div>
<div class="r" style="left:540px;top:451.84999999999997px;width:5px;height:5px;background:rgba(175,175,175,0.35);"></div>
<div class="r" style="left:540px;top:462.05px;width:5px;height:5px;background:rgba(175,175,175,0.28);"></div>
<svg class="r" style="left:214.6px;top:481.4px" width="9" height="9" viewBox="0 0 9 9"><rect x="0.5" y="0.5" width="8" height="8" rx="1.3" fill="#e2e2e2" stroke="#c2c2c2" stroke-width="0.9"/></svg>
<div class="t" style="left:236.6px;transform-origin:0 0;top:474px;font-size:10.02px;line-height:20px;transform:scaleX(0.8929);color:#555;font-weight:normal;font-style:normal;font-family:'Liberation Sans', sans-serif;">25.11.2017, 07:40</div>
<div class="t" style="left:342.6px;transform-origin:0 0;top:474px;font-size:10.08px;line-height:20px;transform:scaleX(0.8929);color:#555;font-weight:normal;font-style:normal;font-family:'Liberation Sans', sans-serif;">[Sistem]</div>
<div class="t" style="left:408.3px;transform-origin:0 0;top:474px;font-size:10.02px;line-height:20px;transform:scaleX(0.8929);color:#555;font-weight:normal;font-style:normal;font-family:'Liberation Sans', sans-serif;">1elTC6-0005q5-Ey</div>
<div class="t" style="right:647.9px;transform-origin:100% 0;top:474px;font-size:10.02px;line-height:20px;transform:scaleX(0.8929);color:#555;font-weight:normal;font-style:normal;font-family:'Liberation Sans', sans-serif;">1,9 KB</div>
<div class="t" style="left:712.7px;transform-origin:0 0;top:474px;font-size:10.02px;line-height:20px;transform:scaleX(0.8929);color:#555;font-weight:normal;font-style:normal;font-family:'Liberation Sans', sans-serif;">Blocat</div>
<svg class="r" style="left:772.8px;top:475.59999999999997px" width="84" height="20" viewBox="-2 0 84 20">
<g fill="#fff" stroke="#c6c6c6" stroke-width="0.7">
<path d="M0.5 0.8 H8 L10.5 3.3 V12.5 H0.5 Z"/><path d="M5 4 H12.8 L15.6 6.8 V17.9 H5 Z"/>
<path d="M20.8 0.8 H28.3 L30.8 3.3 V12.5 H20.8 Z"/><path d="M25.3 4 H33.1 L35.9 6.8 V17.9 H25.3 Z"/>
<path d="M41.6 0.8 H49.1 L51.6 3.3 V12.5 H41.6 Z"/><path d="M46.1 4 H53.9 L56.7 6.8 V17.9 H46.1 Z"/></g>
<g stroke="#d8d8d8" stroke-width="0.6"><path d="M10 9 H14 M10 11 H14 M10 13 H14 M10 15 H14 M30 9 H34 M30 11 H34 M30 13 H34 M30 15 H34 M51 9 H55 M51 11 H55 M51 13 H55 M51 15 H55"/></g>
<circle cx="4.3" cy="7.2" r="4.4" fill="rgba(220,235,235,0.35)" stroke="#2f7d79" stroke-width="1.7"/>
<path d="M7 10.6 L8.9 14.9" stroke="#22706c" stroke-width="2.3" stroke-linecap="round"/>
<ellipse cx="24.5" cy="12.3" rx="5.3" ry="4.7" fill="#0f605d"/><path d="M23.2 10.2 V14.4 L27.2 12.3 Z" fill="#fff"/>
<circle cx="46.2" cy="10.9" r="5.2" fill="#e4eeee" stroke="#2d7672" stroke-width="1.8"/><path d="M43.4 12.6 Q46.4 12.2 48.8 9" stroke="#c0504d" stroke-width="0.9" fill="none"/>
<rect x="61.3" y="2.6" width="13.6" height="9.2" fill="#f3f3f3" stroke="#a0a0a0" stroke-width="0.9"/>
<path d="M61.6 2.9 L68.1 8 L74.6 2.9" fill="none" stroke="#b8b8b8" stroke-width="0.8"/>
<path d="M64.1 11.2 H71.4 V8.9 L78 12.9 L71.4 16.9 V14.7 H64.1 Z" fill="#11625e"/>
</svg>
<div class="r" style="left:522.2px;top:471.79999999999995px;width:92.3px;height:4.4px;background:#f1f1f1;"></div>
<div class="r" style="left:522.2px;top:481.79999999999995px;width:5.1px;height:5.2px;background:#d7d7d7;"></div>
<div class="r" style="left:527.3000000000001px;top:481.79999999999995px;width:5.1px;height:5.2px;background:#b0b0b0;"></div>
<div class="r" style="left:532.4000000000001px;top:481.79999999999995px;width:5.1px;height:5.2px;background:#b3b3b3;"></div>
<div class="r" style="left:537.5px;top:481.79999999999995px;width:5.1px;height:5.2px;background:#afafaf;"></div>
<div class="r" style="left:542.6px;top:481.79999999999995px;width:5.1px;height:5.2px;background:#bbbbbb;"></div>
<div class="r" style="left:547.7px;top:481.79999999999995px;width:5.1px;height:5.2px;background:#b2b2b2;"></div>
<div class="r" style="left:552.8000000000001px;top:481.79999999999995px;width:5.1px;height:5.2px;background:#bbbbbb;"></div>
<div class="r" style="left:557.9000000000001px;top:481.79999999999995px;width:5.1px;height:5.2px;background:#b3b3b3;"></div>
<div class="r" style="left:563.0px;top:481.79999999999995px;width:5.1px;height:5.2px;background:#c8c8c8;"></div>
<div class="r" style="left:568.1px;top:481.79999999999995px;width:5.1px;height:5.2px;background:#eef0f4;"></div>
<div class="r" style="left:540px;top:476.79999999999995px;width:5px;height:5px;background:rgba(175,175,175,0.35);"></div>
<div class="r" style="left:540px;top:487.0px;width:5px;height:5px;background:rgba(175,175,175,0.28);"></div>
<svg class="r" style="left:214.6px;top:506.35px" width="9" height="9" viewBox="0 0 9 9"><rect x="0.5" y="0.5" width="8" height="8" rx="1.3" fill="#e2e2e2" stroke="#c2c2c2" stroke-width="0.9"/></svg>
<div class="t" style="left:236.6px;transform-origin:0 0;top:499px;font-size:10.02px;line-height:20px;transform:scaleX(0.8929);color:#555;font-weight:normal;font-style:normal;font-family:'Liberation Sans', sans-serif;">25.11.2017, 11:36</div>
<div class="t" style="left:342.6px;transform-origin:0 0;top:499px;font-size:10.08px;line-height:20px;transform:scaleX(0.8929);color:#555;font-weight:normal;font-style:normal;font-family:'Liberation Sans', sans-serif;">[Sistem]</div>
<div class="t" style="left:408.3px;transform-origin:0 0;top:499px;font-size:10.02px;line-height:20px;transform:scaleX(0.8929);color:#555;font-weight:normal;font-style:normal;font-family:'Liberation Sans', sans-serif;">1elWss-0004Rv-I6</div>
<div class="t" style="right:647.9px;transform-origin:100% 0;top:499px;font-size:10.02px;line-height:20px;transform:scaleX(0.8929);color:#555;font-weight:normal;font-style:normal;font-family:'Liberation Sans', sans-serif;">1,6 KB</div>
<div class="t" style="left:712.7px;transform-origin:0 0;top:499px;font-size:10.02px;line-height:20px;transform:scaleX(0.8929);color:#555;font-weight:normal;font-style:normal;font-family:'Liberation Sans', sans-serif;">Blocat</div>
<svg class="r" style="left:772.8px;top:500.55px" width="84" height="20" viewBox="-2 0 84 20">
<g fill="#fff" stroke="#c6c6c6" stroke-width="0.7">
<path d="M0.5 0.8 H8 L10.5 3.3 V12.5 H0.5 Z"/><path d="M5 4 H12.8 L15.6 6.8 V17.9 H5 Z"/>
<path d="M20.8 0.8 H28.3 L30.8 3.3 V12.5 H20.8 Z"/><path d="M25.3 4 H33.1 L35.9 6.8 V17.9 H25.3 Z"/>
<path d="M41.6 0.8 H49.1 L51.6 3.3 V12.5 H41.6 Z"/><path d="M46.1 4 H53.9 L56.7 6.8 V17.9 H46.1 Z"/></g>
<g stroke="#d8d8d8" stroke-width="0.6"><path d="M10 9 H14 M10 11 H14 M10 13 H14 M10 15 H14 M30 9 H34 M30 11 H34 M30 13 H34 M30 15 H34 M51 9 H55 M51 11 H55 M51 13 H55 M51 15 H55"/></g>
<circle cx="4.3" cy="7.2" r="4.4" fill="rgba(220,235,235,0.35)" stroke="#2f7d79" stroke-width="1.7"/>
<path d="M7 10.6 L8.9 14.9" stroke="#22706c" stroke-width="2.3" stroke-linecap="round"/>
<ellipse cx="24.5" cy="12.3" rx="5.3" ry="4.7" fill="#0f605d"/><path d="M23.2 10.2 V14.4 L27.2 12.3 Z" fill="#fff"/>
<circle cx="46.2" cy="10.9" r="5.2" fill="#e4eeee" stroke="#2d7672" stroke-width="1.8"/><path d="M43.4 12.6 Q46.4 12.2 48.8 9" stroke="#c0504d" stroke-width="0.9" fill="none"/>
<rect x="61.3" y="2.6" width="13.6" height="9.2" fill="#f3f3f3" stroke="#a0a0a0" stroke-width="0.9"/>
<path d="M61.6 2.9 L68.1 8 L74.6 2.9" fill="none" stroke="#b8b8b8" stroke-width="0.8"/>
<path d="M64.1 11.2 H71.4 V8.9 L78 12.9 L71.4 16.9 V14.7 H64.1 Z" fill="#11625e"/>
</svg>
<div class="r" style="left:522.2px;top:496.75px;width:92.3px;height:4.4px;background:#f1f1f1;"></div>
<div class="r" style="left:522.2px;top:506.75px;width:5.1px;height:5.2px;background:#d7d7d7;"></div>
<div class="r" style="left:527.3000000000001px;top:506.75px;width:5.1px;height:5.2px;background:#b4b4b4;"></div>
<div class="r" style="left:532.4000000000001px;top:506.75px;width:5.1px;height:5.2px;background:#b6b6b6;"></div>
<div class="r" style="left:537.5px;top:506.75px;width:5.1px;height:5.2px;background:#b6b6b6;"></div>
<div class="r" style="left:542.6px;top:506.75px;width:5.1px;height:5.2px;background:#b0b0b0;"></div>
<div class="r" style="left:547.7px;top:506.75px;width:5.1px;height:5.2px;background:#b3b3b3;"></div>
<div class="r" style="left:552.8000000000001px;top:506.75px;width:5.1px;height:5.2px;background:#afafaf;"></div>
<div class="r" style="left:557.9000000000001px;top:506.75px;width:5.1px;height:5.2px;background:#bbbbbb;"></div>
<div class="r" style="left:563.0px;top:506.75px;width:5.1px;height:5.2px;background:#b2b2b2;"></div>
<div class="r" style="left:568.1px;top:506.75px;width:5.1px;height:5.2px;background:#d0d0d0;"></div>
<div class="r" style="left:573.2px;top:506.75px;width:5.1px;height:5.2px;background:#b3b3b3;"></div>
<div class="r" style="left:578.3000000000001px;top:506.75px;width:5.1px;height:5.2px;background:#b9b9b9;"></div>
<div class="r" style="left:583.4000000000001px;top:506.75px;width:5.1px;height:5.2px;background:#b8b8b8;"></div>
<div class="r" style="left:588.5px;top:506.75px;width:5.1px;height:5.2px;background:#b2b2b2;"></div>
<div class="r" style="left:593.6px;top:506.75px;width:5.1px;height:5.2px;background:#b1b1b1;"></div>
<div class="r" style="left:598.7px;top:506.75px;width:5.1px;height:5.2px;background:#b7b7b7;"></div>
<div class="r" style="left:603.8000000000001px;top:506.75px;width:5.1px;height:5.2px;background:#c8c8c8;"></div>
<div class="r" style="left:608.9000000000001px;top:506.75px;width:5.1px;height:5.2px;background:#eef0f4;"></div>
<div class="r" style="left:535px;top:501.75px;width:5px;height:5px;background:rgba(175,175,175,0.35);"></div>
<div class="r" style="left:535px;top:511.95000000000005px;width:5px;height:5px;background:rgba(175,175,175,0.28);"></div>
<svg class="r" style="left:214.6px;top:531.3px" width="9" height="9" viewBox="0 0 9 9"><rect x="0.5" y="0.5" width="8" height="8" rx="1.3" fill="#e2e2e2" stroke="#c2c2c2" stroke-width="0.9"/></svg>
<div class="t" style="left:236.6px;transform-origin:0 0;top:524px;font-size:10.02px;line-height:20px;transform:scaleX(0.8929);color:#555;font-weight:normal;font-style:normal;font-family:'Liberation Sans', sans-serif;">25.11.2017, 03:50</div>
<div class="t" style="left:342.6px;transform-origin:0 0;top:524px;font-size:10.08px;line-height:20px;transform:scaleX(0.8929);color:#555;font-weight:normal;font-style:normal;font-family:'Liberation Sans', sans-serif;">[Sistem]</div>
<div class="t" style="left:408.3px;transform-origin:0 0;top:524px;font-size:10.02px;line-height:20px;transform:scaleX(0.8929);color:#555;font-weight:normal;font-style:normal;font-family:'Liberation Sans', sans-serif;">1elPbV-00075p-R6</div>
<div class="t" style="right:647.9px;transform-origin:100% 0;top:524px;font-size:10.02px;line-height:20px;transform:scaleX(0.8929);color:#555;font-weight:normal;font-style:normal;font-family:'Liberation Sans', sans-serif;">1,6 KB</div>
<div class="t" style="left:712.7px;transform-origin:0 0;top:524px;font-size:10.02px;line-height:20px;transform:scaleX(0.8929);color:#555;font-weight:normal;font-style:normal;font-family:'Liberation Sans', sans-serif;">Blocat</div>
<svg class="r" style="left:772.8px;top:525.5px" width="84" height="20" viewBox="-2 0 84 20">
<g fill="#fff" stroke="#c6c6c6" stroke-width="0.7">
<path d="M0.5 0.8 H8 L10.5 3.3 V12.5 H0.5 Z"/><path d="M5 4 H12.8 L15.6 6.8 V17.9 H5 Z"/>
<path d="M20.8 0.8 H28.3 L30.8 3.3 V12.5 H20.8 Z"/><path d="M25.3 4 H33.1 L35.9 6.8 V17.9 H25.3 Z"/>
<path d="M41.6 0.8 H49.1 L51.6 3.3 V12.5 H41.6 Z"/><path d="M46.1 4 H53.9 L56.7 6.8 V17.9 H46.1 Z"/></g>
<g stroke="#d8d8d8" stroke-width="0.6"><path d="M10 9 H14 M10 11 H14 M10 13 H14 M10 15 H14 M30 9 H34 M30 11 H34 M30 13 H34 M30 15 H34 M51 9 H55 M51 11 H55 M51 13 H55 M51 15 H55"/></g>
<circle cx="4.3" cy="7.2" r="4.4" fill="rgba(220,235,235,0.35)" stroke="#2f7d79" stroke-width="1.7"/>
<path d="M7 10.6 L8.9 14.9" stroke="#22706c" stroke-width="2.3" stroke-linecap="round"/>
<ellipse cx="24.5" cy="12.3" rx="5.3" ry="4.7" fill="#0f605d"/><path d="M23.2 10.2 V14.4 L27.2 12.3 Z" fill="#fff"/>
<circle cx="46.2" cy="10.9" r="5.2" fill="#e4eeee" stroke="#2d7672" stroke-width="1.8"/><path d="M43.4 12.6 Q46.4 12.2 48.8 9" stroke="#c0504d" stroke-width="0.9" fill="none"/>
<rect x="61.3" y="2.6" width="13.6" height="9.2" fill="#f3f3f3" stroke="#a0a0a0" stroke-width="0.9"/>
<path d="M61.6 2.9 L68.1 8 L74.6 2.9" fill="none" stroke="#b8b8b8" stroke-width="0.8"/>
<path d="M64.1 11.2 H71.4 V8.9 L78 12.9 L71.4 16.9 V14.7 H64.1 Z" fill="#11625e"/>
</svg>
<div class="r" style="left:522.2px;top:521.6999999999999px;width:92.3px;height:4.4px;background:#f1f1f1;"></div>
<div class="r" style="left:522.2px;top:531.6999999999999px;width:5.1px;height:5.2px;background:#d7d7d7;"></div>
<div class="r" style="left:527.3000000000001px;top:531.6999999999999px;width:5.1px;height:5.2px;background:#b6b6b6;"></div>
<div class="r" style="left:532.4000000000001px;top:531.6999999999999px;width:5.1px;height:5.2px;background:#b8b8b8;"></div>
<div class="r" style="left:537.5px;top:531.6999999999999px;width:5.1px;height:5.2px;background:#b5b5b5;"></div>
<div class="r" style="left:542.6px;top:531.6999999999999px;width:5.1px;height:5.2px;background:#b4b4b4;"></div>
<div class="r" style="left:547.7px;top:531.6999999999999px;width:5.1px;height:5.2px;background:#b6b6b6;"></div>
<div class="r" style="left:552.8000000000001px;top:531.6999999999999px;width:5.1px;height:5.2px;background:#b6b6b6;"></div>
<div class="r" style="left:557.9000000000001px;top:531.6999999999999px;width:5.1px;height:5.2px;background:#b0b0b0;"></div>
<div class="r" style="left:563.0px;top:531.6999999999999px;width:5.1px;height:5.2px;background:#c8c8c8;"></div>
<div class="r" style="left:568.1px;top:531.6999999999999px;width:5.1px;height:5.2px;background:#eef0f4;"></div>
<div class="r" style="left:540px;top:526.6999999999999px;width:5px;height:5px;background:rgba(175,175,175,0.35);"></div>
<div class="r" style="left:540px;top:536.9px;width:5px;height:5px;background:rgba(175,175,175,0.28);"></div>
<svg class="r" style="left:214.6px;top:556.25px" width="9" height="9" viewBox="0 0 9 9"><rect x="0.5" y="0.5" width="8" height="8" rx="1.3" fill="#e2e2e2" stroke="#c2c2c2" stroke-width="0.9"/></svg>
<div class="t" style="left:236.6px;transform-origin:0 0;top:549px;font-size:10.02px;line-height:20px;transform:scaleX(0.8929);color:#555;font-weight:normal;font-style:normal;font-family:'Liberation Sans', sans-serif;">24.11.2017, 23:13</div>
<div class="t" style="left:342.6px;transform-origin:0 0;top:549px;font-size:10.08px;line-height:20px;transform:scaleX(0.8929);color:#555;font-weight:normal;font-style:normal;font-family:'Liberation Sans', sans-serif;">[Sistem]</div>
<div class="t" style="left:408.3px;transform-origin:0 0;top:549px;font-size:10.02px;line-height:20px;transform:scaleX(0.8929);color:#555;font-weight:normal;font-style:normal;font-family:'Liberation Sans', sans-serif;">1elLI1-0000MR-7v</div>
<div class="t" style="right:647.9px;transform-origin:100% 0;top:549px;font-size:10.02px;line-height:20px;transform:scaleX(0.8929);color:#555;font-weight:normal;font-style:normal;font-family:'Liberation Sans', sans-serif;">2,4 KB</div>
<div class="t" style="left:712.7px;transform-origin:0 0;top:549px;font-size:10.02px;line-height:20px;transform:scaleX(0.8929);color:#555;font-weight:normal;font-style:normal;font-family:'Liberation Sans', sans-serif;">Blocat</div>
<svg class="r" style="left:772.8px;top:550.45px" width="84" height="20" viewBox="-2 0 84 20">
<g fill="#fff" stroke="#c6c6c6" stroke-width="0.7">
<path d="M0.5 0.8 H8 L10.5 3.3 V12.5 H0.5 Z"/><path d="M5 4 H12.8 L15.6 6.8 V17.9 H5 Z"/>
<path d="M20.8 0.8 H28.3 L30.8 3.3 V12.5 H20.8 Z"/><path d="M25.3 4 H33.1 L35.9 6.8 V17.9 H25.3 Z"/>
<path d="M41.6 0.8 H49.1 L51.6 3.3 V12.5 H41.6 Z"/><path d="M46.1 4 H53.9 L56.7 6.8 V17.9 H46.1 Z"/></g>
<g stroke="#d8d8d8" stroke-width="0.6"><path d="M10 9 H14 M10 11 H14 M10 13 H14 M10 15 H14 M30 9 H34 M30 11 H34 M30 13 H34 M30 15 H34 M51 9 H55 M51 11 H55 M51 13 H55 M51 15 H55"/></g>
<circle cx="4.3" cy="7.2" r="4.4" fill="rgba(220,235,235,0.35)" stroke="#2f7d79" stroke-width="1.7"/>
<path d="M7 10.6 L8.9 14.9" stroke="#22706c" stroke-width="2.3" stroke-linecap="round"/>
<ellipse cx="24.5" cy="12.3" rx="5.3" ry="4.7" fill="#0f605d"/><path d="M23.2 10.2 V14.4 L27.2 12.3 Z" fill="#fff"/>
<circle cx="46.2" cy="10.9" r="5.2" fill="#e4eeee" stroke="#2d7672" stroke-width="1.8"/><path d="M43.4 12.6 Q46.4 12.2 48.8 9" stroke="#c0504d" stroke-width="0.9" fill="none"/>
<rect x="61.3" y="2.6" width="13.6" height="9.2" fill="#f3f3f3" stroke="#a0a0a0" stroke-width="0.9"/>
<path d="M61.6 2.9 L68.1 8 L74.6 2.9" fill="none" stroke="#b8b8b8" stroke-width="0.8"/>
<path d="M64.1 11.2 H71.4 V8.9 L78 12.9 L71.4 16.9 V14.7 H64.1 Z" fill="#11625e"/>
</svg>
<div class="r" style="left:522.2px;top:546.65px;width:92.3px;height:4.4px;background:#f1f1f1;"></div>
<div class="r" style="left:522.2px;top:556.65px;width:5.1px;height:5.2px;background:#d7d7d7;"></div>
<div class="r" style="left:527.3000000000001px;top:556.65px;width:5.1px;height:5.2px;background:#b2b2b2;"></div>
<div class="r" style="left:532.4000000000001px;top:556.65px;width:5.1px;height:5.2px;background:#b1b1b1;"></div>
<div class="r" style="left:537.5px;top:556.65px;width:5.1px;height:5.2px;background:#b7b7b7;"></div>
<div class="r" style="left:542.6px;top:556.65px;width:5.1px;height:5.2px;background:#b6b6b6;"></div>
<div class="r" style="left:547.7px;top:556.65px;width:5.1px;height:5.2px;background:#b8b8b8;"></div>
<div class="r" style="left:552.8000000000001px;top:556.65px;width:5.1px;height:5.2px;background:#b5b5b5;"></div>
<div class="r" style="left:557.9000000000001px;top:556.65px;width:5.1px;height:5.2px;background:#b4b4b4;"></div>
<div class="r" style="left:563.0px;top:556.65px;width:5.1px;height:5.2px;background:#c8c8c8;"></div>
<div class="r" style="left:568.1px;top:556.65px;width:5.1px;height:5.2px;background:#eef0f4;"></div>
<div class="r" style="left:540px;top:551.65px;width:5px;height:5px;background:rgba(175,175,175,0.35);"></div>
<div class="r" style="left:540px;top:561.85px;width:5px;height:5px;background:rgba(175,175,175,0.28);"></div>
<svg class="r" style="left:214.6px;top:581.2px" width="9" height="9" viewBox="0 0 9 9"><rect x="0.5" y="0.5" width="8" height="8" rx="1.3" fill="#e2e2e2" stroke="#c2c2c2" stroke-width="0.9"/></svg>
<div class="t" style="left:236.6px;transform-origin:0 0;top:574px;font-size:10.02px;line-height:20px;transform:scaleX(0.8929);color:#555;font-weight:normal;font-style:normal;font-family:'Liberation Sans', sans-serif;">25.11.2017, 05:18</div>
<div class="t" style="left:342.6px;transform-origin:0 0;top:574px;font-size:10.08px;line-height:20px;transform:scaleX(0.8929);color:#555;font-weight:normal;font-style:normal;font-family:'Liberation Sans', sans-serif;">[Sistem]</div>
<div class="t" style="left:408.3px;transform-origin:0 0;top:574px;font-size:10.02px;line-height:20px;transform:scaleX(0.8929);color:#555;font-weight:normal;font-style:normal;font-family:'Liberation Sans', sans-serif;">1elQzF-0005zw-Sf</div>
<div class="t" style="right:647.9px;transform-origin:100% 0;top:574px;font-size:10.02px;line-height:20px;transform:scaleX(0.8929);color:#555;font-weight:normal;font-style:normal;font-family:'Liberation Sans', sans-serif;">1,8 KB</div>
<div class="t" style="left:712.7px;transform-origin:0 0;top:574px;font-size:10.02px;line-height:20px;transform:scaleX(0.8929);color:#555;font-weight:normal;font-style:normal;font-family:'Liberation Sans', sans-serif;">Blocat</div>
<svg class="r" style="left:772.8px;top:575.4000000000001px" width="84" height="20" viewBox="-2 0 84 20">
<g fill="#fff" stroke="#c6c6c6" stroke-width="0.7">
<path d="M0.5 0.8 H8 L10.5 3.3 V12.5 H0.5 Z"/><path d="M5 4 H12.8 L15.6 6.8 V17.9 H5 Z"/>
<path d="M20.8 0.8 H28.3 L30.8 3.3 V12.5 H20.8 Z"/><path d="M25.3 4 H33.1 L35.9 6.8 V17.9 H25.3 Z"/>
<path d="M41.6 0.8 H49.1 L51.6 3.3 V12.5 H41.6 Z"/><path d="M46.1 4 H53.9 L56.7 6.8 V17.9 H46.1 Z"/></g>
<g stroke="#d8d8d8" stroke-width="0.6"><path d="M10 9 H14 M10 11 H14 M10 13 H14 M10 15 H14 M30 9 H34 M30 11 H34 M30 13 H34 M30 15 H34 M51 9 H55 M51 11 H55 M51 13 H55 M51 15 H55"/></g>
<circle cx="4.3" cy="7.2" r="4.4" fill="rgba(220,235,235,0.35)" stroke="#2f7d79" stroke-width="1.7"/>
<path d="M7 10.6 L8.9 14.9" stroke="#22706c" stroke-width="2.3" stroke-linecap="round"/>
<ellipse cx="24.5" cy="12.3" rx="5.3" ry="4.7" fill="#0f605d"/><path d="M23.2 10.2 V14.4 L27.2 12.3 Z" fill="#fff"/>
<circle cx="46.2" cy="10.9" r="5.2" fill="#e4eeee" stroke="#2d7672" stroke-width="1.8"/><path d="M43.4 12.6 Q46.4 12.2 48.8 9" stroke="#c0504d" stroke-width="0.9" fill="none"/>
<rect x="61.3" y="2.6" width="13.6" height="9.2" fill="#f3f3f3" stroke="#a0a0a0" stroke-width="0.9"/>
<path d="M61.6 2.9 L68.1 8 L74.6 2.9" fill="none" stroke="#b8b8b8" stroke-width="0.8"/>
<path d="M64.1 11.2 H71.4 V8.9 L78 12.9 L71.4 16.9 V14.7 H64.1 Z" fill="#11625e"/>
</svg>
<div class="r" style="left:522.2px;top:571.6px;width:92.3px;height:4.4px;background:#f1f1f1;"></div>
<div class="r" style="left:522.2px;top:581.6px;width:5.1px;height:5.2px;background:#d7d7d7;"></div>
<div class="r" style="left:527.3000000000001px;top:581.6px;width:5.1px;height:5.2px;background:#b3b3b3;"></div>
<div class="r" style="left:532.4000000000001px;top:581.6px;width:5.1px;height:5.2px;background:#b9b9b9;"></div>
<div class="r" style="left:537.5px;top:581.6px;width:5.1px;height:5.2px;background:#b8b8b8;"></div>
<div class="r" style="left:542.6px;top:581.6px;width:5.1px;height:5.2px;background:#b2b2b2;"></div>
<div class="r" style="left:547.7px;top:581.6px;width:5.1px;height:5.2px;background:#b1b1b1;"></div>
<div class="r" style="left:552.8000000000001px;top:581.6px;width:5.1px;height:5.2px;background:#b7b7b7;"></div>
<div class="r" style="left:557.9000000000001px;top:581.6px;width:5.1px;height:5.2px;background:#b6b6b6;"></div>
<div class="r" style="left:563.0px;top:581.6px;width:5.1px;height:5.2px;background:#b8b8b8;"></div>
<div class="r" style="left:568.1px;top:581.6px;width:5.1px;height:5.2px;background:#b5b5b5;"></div>
<div class="r" style="left:573.2px;top:581.6px;width:5.1px;height:5.2px;background:#b4b4b4;"></div>
<div class="r" style="left:578.3000000000001px;top:581.6px;width:5.1px;height:5.2px;background:#c8c8c8;"></div>
<div class="r" style="left:583.4000000000001px;top:581.6px;width:5.1px;height:5.2px;background:#eef0f4;"></div>
<div class="r" style="left:550px;top:576.6px;width:10px;height:5px;background:rgba(175,175,175,0.35);"></div>
<div class="r" style="left:550px;top:586.8000000000001px;width:10px;height:5px;background:rgba(175,175,175,0.28);"></div>
<div class="r" style="left:1348.7px;top:90px;width:4.3px;height:523px;background:#f1f1f1;border-left:1px solid #e9e9e9;box-sizing:border-box"></div>
<div class="r" style="left:1350.8px;top:245px;width:2.2px;height:368px;background:#bebebe;"></div>
</body></html>
